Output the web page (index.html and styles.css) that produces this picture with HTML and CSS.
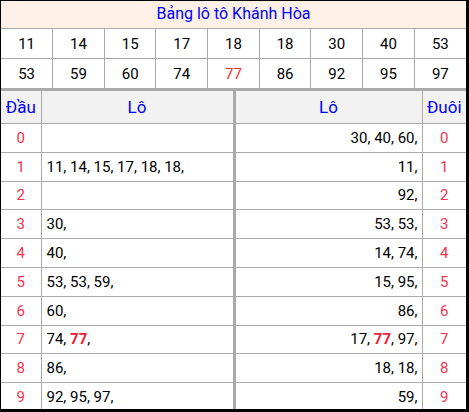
FILE: index.html
```html
<!DOCTYPE html>
<html lang="vi">
<head>
<meta charset="utf-8">
<title>Bảng lô tô Khánh Hòa</title>
<link rel="stylesheet" href="styles.css">
</head>
<body>
<div class="board">
  <div class="title">Bảng lô tô Khánh Hòa</div>
  <table class="prizes">
    <tr><td>11</td><td>14</td><td>15</td><td>17</td><td>18</td><td>18</td><td>30</td><td>40</td><td>53</td></tr>
    <tr><td>53</td><td>59</td><td>60</td><td>74</td><td class="hot">77</td><td>86</td><td>92</td><td>95</td><td>97</td></tr>
  </table>
  <table class="loto">
    <colgroup><col class="c-head"><col class="c-lo"><col class="c-lo2"><col class="c-tail"></colgroup>
    <tr class="hdr"><th>Đầu</th><th>Lô</th><th class="sep">Lô</th><th>Đuôi</th></tr>
    <tr><td class="d">0</td><td class="l"></td><td class="r sep">30, 40, 60,</td><td class="d">0</td></tr>
    <tr><td class="d">1</td><td class="l">11, 14, 15, 17, 18, 18,</td><td class="r sep">11,</td><td class="d">1</td></tr>
    <tr><td class="d">2</td><td class="l"></td><td class="r sep">92,</td><td class="d">2</td></tr>
    <tr><td class="d">3</td><td class="l">30,</td><td class="r sep">53, 53,</td><td class="d">3</td></tr>
    <tr><td class="d">4</td><td class="l">40,</td><td class="r sep">14, 74,</td><td class="d">4</td></tr>
    <tr><td class="d">5</td><td class="l">53, 53, 59,</td><td class="r sep">15, 95,</td><td class="d">5</td></tr>
    <tr><td class="d">6</td><td class="l">60,</td><td class="r sep">86,</td><td class="d">6</td></tr>
    <tr><td class="d">7</td><td class="l">74, <b class="hot">77</b>,</td><td class="r sep">17, <b class="hot">77</b>, 97,</td><td class="d">7</td></tr>
    <tr><td class="d">8</td><td class="l">86,</td><td class="r sep">18, 18,</td><td class="d">8</td></tr>
    <tr><td class="d">9</td><td class="l">92, 95, 97,</td><td class="r sep">59,</td><td class="d">9</td></tr>
  </table>
</div>
</body>
</html>
```
FILE: styles.css
```css
html, body {
  margin: 0;
  padding: 0;
  background: #fff;
}
body {
  font-family: Roboto, "Liberation Sans", Arial, sans-serif;
  color: #000;
}
.board {
  width: 469px;
  height: 412px;
  box-sizing: border-box;
  border-top: 1px solid #000;
  border-left: 1px solid #000;
  border-right: 3px solid #000;
  border-bottom: 3px solid #000;
  overflow: hidden;
}
.title {
  height: 28px;
  line-height: 26px;
  background: #fdf1e7;
  color: #0000ff;
  font-size: 16px;
  text-align: center;
  border-bottom: 1px solid #aaa;
  box-sizing: border-box;
}
table {
  border-collapse: collapse;
  width: 100%;
  table-layout: fixed;
}
.prizes td {
  height: 29px;
  padding: 0;
  text-align: center;
  font-size: 15px;
  border: 1px solid #aaa;
  border-top: 0;
}
.prizes td:first-child { border-left: 0; }
.prizes td:last-child { border-right: 0; }
.prizes td.hot { color: #f03030; }
.prizes tr:last-child td { border-bottom: 3px solid #aaa; }

.loto .c-head { width: 40px; }
.loto .c-lo { width: 193px; }
.loto .c-tail { width: 44px; }
.loto th, .loto td {
  padding: 0;
  border: 1px solid #aaa;
}
.loto tr > :first-child { border-left: 0; }
.loto tr > :last-child { border-right: 0; }
.loto tr:first-child > * { border-top: 0; }
.loto tr:last-child > * { border-bottom: 0; }
.loto th {
  height: 32px;
  background: #f2f2f2;
  color: #0000ff;
  font-weight: normal;
  font-size: 17px;
  text-align: center;
  white-space: nowrap;
}
.loto td {
  height: 27.8px;
  font-size: 15px;
}
.loto .sep { border-left: 3px solid #aaa; }
.loto td.d {
  text-align: center;
  color: #f5334d;
}
.loto td.l {
  text-align: left;
  padding-left: 5px;
}
.loto td.r {
  text-align: right;
  padding-right: 4px;
}
.loto b.hot {
  color: #ee2233;
  font-weight: bold;
}
```
